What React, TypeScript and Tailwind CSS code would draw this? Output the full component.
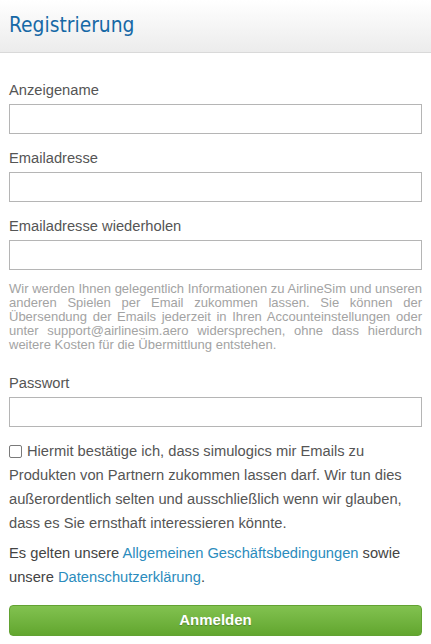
export default function App() {
  const fields = ['Anzeigename', 'Emailadresse', 'Emailadresse wiederholen'];

  return (
    <div className="w-[431px] min-h-[644px] bg-white font-['Liberation_Sans',Arial,sans-serif] text-[14.7px] text-[#555]">
      <div className="h-[53px] bg-gradient-to-b from-white to-[#ececec] border-b border-[#d9d9d9] px-[9px] pt-[11px]">
        <h1 className="font-['DejaVu_Sans_Condensed','DejaVu_Sans',Tahoma,sans-serif] text-[20.8px] leading-[28px] text-[#1669a6]">
          Registrierung
        </h1>
      </div>

      <div className="px-[9px] pt-[27px]">
        {fields.map((label, i) => (
          <div key={label} className={i === 0 ? '' : 'mt-[14px]'}>
            <label className="block leading-[20px] mb-[4px]">{label}</label>
            <input
              type="text"
              className="block w-full h-[30px] border border-[#b5b5b5] bg-white outline-none px-2"
            />
          </div>
        ))}

        <p className="mt-[12px] text-[13px] leading-[14px] text-[#a3a3a3] text-justify">
          Wir werden Ihnen gelegentlich Informationen zu AirlineSim und unseren anderen Spielen per Email
          zukommen lassen. Sie können der Übersendung der Emails jederzeit in Ihren Accounteinstellungen oder
          unter support@airlinesim.aero widersprechen, ohne dass hierdurch weitere Kosten für die Übermittlung
          entstehen.
        </p>

        <div className="mt-[21px]">
          <label className="block leading-[20px] mb-[4px]">Passwort</label>
          <input
            type="password"
            className="block w-full h-[30px] border border-[#b5b5b5] bg-white outline-none px-2"
          />
        </div>

        <p className="mt-[12px] leading-[24px]">
          <input
            type="checkbox"
            className="appearance-none inline-block align-[-2px] w-[13px] h-[13px] border-[1.5px] border-[#7a7a7a] rounded-[2px] bg-white mr-[5px]"
          />
          Hiermit bestätige ich, dass simulogics mir Emails zu Produkten von Partnern zukommen lassen darf. Wir
          tun dies außerordentlich selten und ausschließlich wenn wir glauben, dass es Sie ernsthaft
          interessieren könnte.
        </p>

        <p className="mt-[6px] leading-[24px] text-[#444]">
          Es gelten unsere <a href="#" className="text-[#2b8cbd]">Allgemeinen Geschäftsbedingungen</a> sowie
          unsere <a href="#" className="text-[#2b8cbd]">Datenschutzerklärung</a>.
        </p>

        <button className="mt-[16px] block w-full h-[31px] rounded-[4px] border border-[#62a232] bg-gradient-to-b from-[#82c250] to-[#62a62e] text-white font-bold text-[15px] [text-shadow:0_1px_1px_rgba(0,0,0,0.25)]">
          Anmelden
        </button>
      </div>
    </div>
  );
}
